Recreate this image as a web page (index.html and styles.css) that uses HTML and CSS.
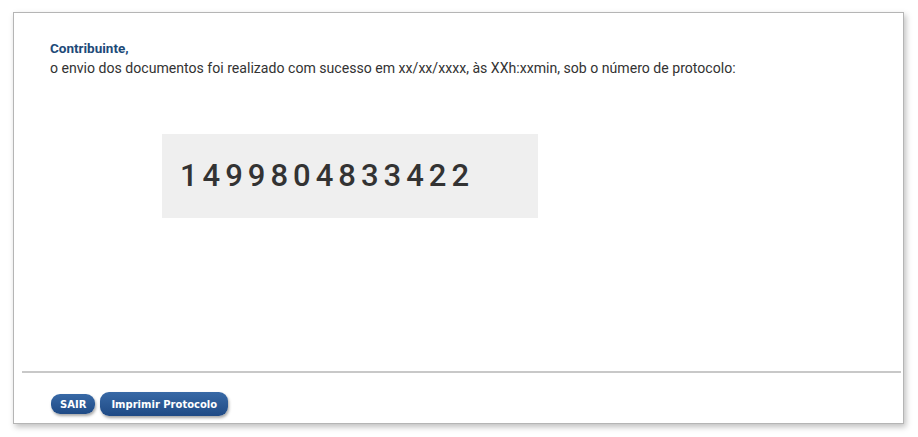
FILE: index.html
```html
<!DOCTYPE html>
<html lang="pt-BR">
<head>
    <meta charset="UTF-8">
    <title>Protocolo de envio</title>
    <link rel="stylesheet" href="styles.css">
</head>
<body>
    <div class="panel">
        <!-- Mensagem -->
        <div class="message">
            <h2>Contribuinte,</h2>
            <p>o envio dos documentos foi realizado com sucesso em xx/xx/xxxx, às XXh:xxmin, sob o número de protocolo:</p>
        </div>

        <!-- Número do protocolo -->
        <div class="protocol-box">1499804833422</div>

        <!-- Ações -->
        <div class="actions">
            <button class="btn btn-small">SAIR</button>
            <button class="btn">Imprimir Protocolo</button>
        </div>
    </div>
</body>
</html>
```

FILE: styles.css
```css
/* General */
body {
    margin: 0;
    background: #fff;
    font-family: 'Roboto', 'Liberation Sans', sans-serif;
    padding: 12px 14px 13px 13px;
}

/* Panel */
.panel {
    height: 410px;
    border: 1px solid #b5b5b5;
    background: #fff;
    box-shadow: 2px 3px 6px rgba(0, 0, 0, 0.25);
    display: flex;
    flex-direction: column;
}

/* Message */
.message {
    padding: 27px 36px 0 36px;
}

.message h2 {
    margin: 0;
    font-size: 13.5px;
    font-weight: bold;
    color: #1d4a78;
    line-height: 16px;
}

.message p {
    margin: 4px 0 0 0;
    font-size: 14.1px;
    color: #333;
    line-height: 16px;
}

/* Protocol */
.protocol-box {
    margin: 58px 0 0 148px;
    width: 376px;
    height: 84px;
    background: #efefef;
    box-sizing: border-box;
    padding: 24px 0 0 18px;
    font-size: 31px;
    font-weight: 500;
    letter-spacing: 5px;
    color: #333;
    line-height: 36px;
}

/* Actions */
.actions {
    margin: auto 2px 0 8px;
    border-top: 2px solid #c8c8c8;
    padding: 19px 0 7px 29px;
    display: flex;
    align-items: center;
    gap: 5px;
}

.btn {
    font-family: 'DejaVu Sans', Verdana, sans-serif;
    font-weight: bold;
    font-size: 10px;
    color: #fff;
    background: linear-gradient(#3869a6, #1f4a85);
    border: none;
    border-radius: 9px;
    height: 24px;
    padding: 0 11px;
    box-shadow: 1px 2px 3px rgba(0, 0, 0, 0.35);
    cursor: pointer;
}

.btn-small {
    height: 20px;
    padding: 0 9px;
    font-size: 10px;
}
```
